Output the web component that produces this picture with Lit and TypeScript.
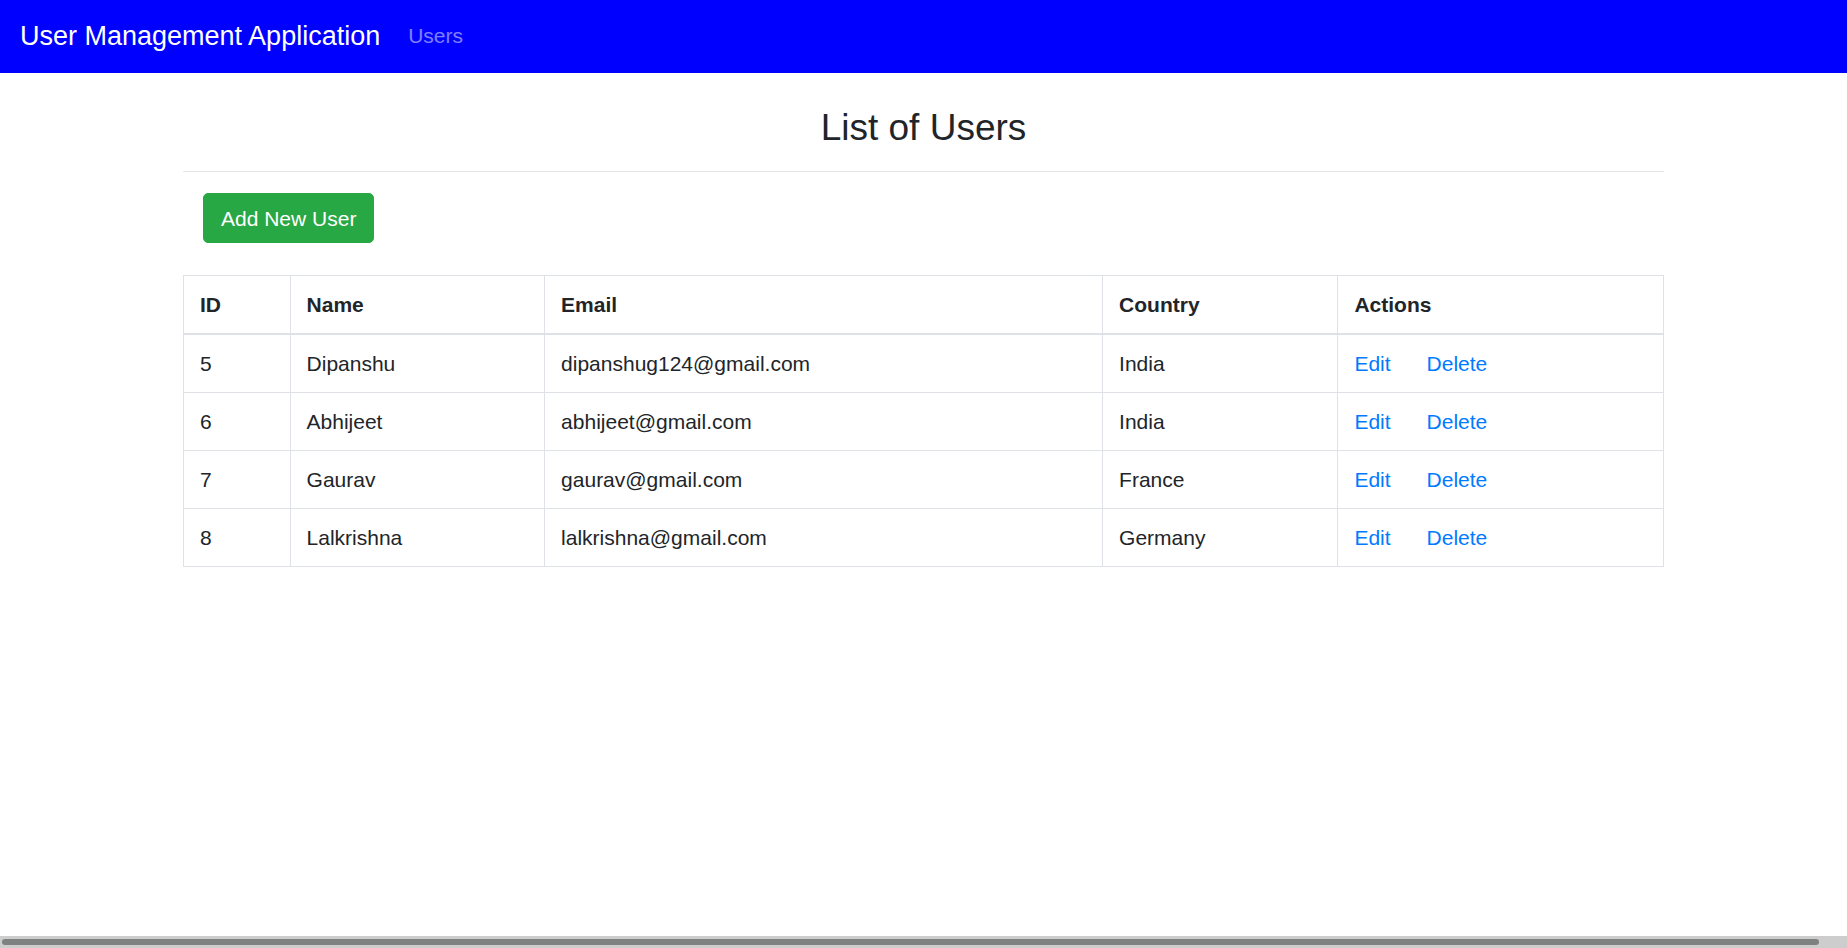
import { LitElement, html, css } from "lit";
import { customElement, state } from "lit/decorators.js";

interface User {
  id: number;
  name: string;
  email: string;
  country: string;
}

@customElement("app-root")
export class AppRoot extends LitElement {
  static styles = css`
    :host {
      display: flex;
      flex-direction: column;
      min-height: 100vh;
      background: #fff;
      color: #212529;
      font-family: "Liberation Sans", Arial, sans-serif;
      font-size: 21px;
      line-height: 25px;
    }
    * {
      box-sizing: border-box;
    }
    a {
      color: #007bff;
      text-decoration: none;
    }
    .navbar {
      display: flex;
      align-items: center;
      gap: 28px;
      padding: 16px 20px;
      background: blue;
    }
    .navbar .brand {
      color: #fff;
      font-size: 27px;
      line-height: 41px;
    }
    .navbar .nav-link {
      padding-bottom: 2px;
      color: rgba(255, 255, 255, 0.5);
    }
    .container {
      flex: 1;
      width: 100%;
      max-width: 1481px;
      margin: 0 auto;
      padding: 33px 0;
    }
    .title {
      margin: 0;
      font-size: 37px;
      font-weight: 500;
      line-height: 44px;
      text-align: center;
    }
    .rule {
      height: 1px;
      margin: 21px 0;
      border: 0;
      background: rgba(0, 0, 0, 0.1);
    }
    .toolbar {
      display: flex;
      padding: 0 20px;
      margin-bottom: 32px;
    }
    .add {
      padding: 9px 17px 7px;
      border: 1px solid #28a745;
      border-radius: 5px;
      background: #28a745;
      color: #fff;
      line-height: 32px;
    }
    .users {
      width: 100%;
      border-collapse: collapse;
    }
    .users th,
    .users td {
      padding: 16px;
      border: 1px solid #dee2e6;
      text-align: left;
    }
    .users thead th {
      border-bottom-width: 2px;
    }
    .col-id {
      width: 7.2%;
    }
    .col-name {
      width: 17.2%;
    }
    .col-email {
      width: 37.7%;
    }
    .col-country {
      width: 15.9%;
    }
    .col-actions {
      width: 22%;
    }
    .actions {
      display: flex;
      gap: 36px;
    }
    .scroll-track {
      height: 12px;
      padding: 3px 28px 3px 2px;
      background: #cdcdcd;
    }
    .scroll-thumb {
      height: 6px;
      border-radius: 3px;
      background: #7d8180;
    }
  `;

  @state() private users: User[] = [
    { id: 5, name: "Dipanshu", email: "dipanshug124@gmail.com", country: "India" },
    { id: 6, name: "Abhijeet", email: "abhijeet@gmail.com", country: "India" },
    { id: 7, name: "Gaurav", email: "gaurav@gmail.com", country: "France" },
    { id: 8, name: "Lalkrishna", email: "lalkrishna@gmail.com", country: "Germany" },
  ];

  render() {
    return html`
      <nav class="navbar">
        <a class="brand" href="#">User Management Application</a>
        <a class="nav-link" href="#list">Users</a>
      </nav>
      <main class="container">
        <h3 class="title">List of Users</h3>
        <hr class="rule" />
        <div class="toolbar"><a class="add" href="#new">Add New User</a></div>
        <table class="users">
          <colgroup>
            <col class="col-id" />
            <col class="col-name" />
            <col class="col-email" />
            <col class="col-country" />
            <col class="col-actions" />
          </colgroup>
          <thead>
            <tr>
              <th scope="col">ID</th>
              <th scope="col">Name</th>
              <th scope="col">Email</th>
              <th scope="col">Country</th>
              <th scope="col">Actions</th>
            </tr>
          </thead>
          <tbody>
            ${this.users.map(
              (u) => html`
                <tr>
                  <td>${u.id}</td>
                  <td>${u.name}</td>
                  <td>${u.email}</td>
                  <td>${u.country}</td>
                  <td>
                    <div class="actions">
                      <a href="#edit-${u.id}">Edit</a>
                      <a href="#delete-${u.id}">Delete</a>
                    </div>
                  </td>
                </tr>
              `
            )}
          </tbody>
        </table>
      </main>
      <div class="scroll-track" aria-hidden="true"><div class="scroll-thumb"></div></div>
    `;
  }
}
